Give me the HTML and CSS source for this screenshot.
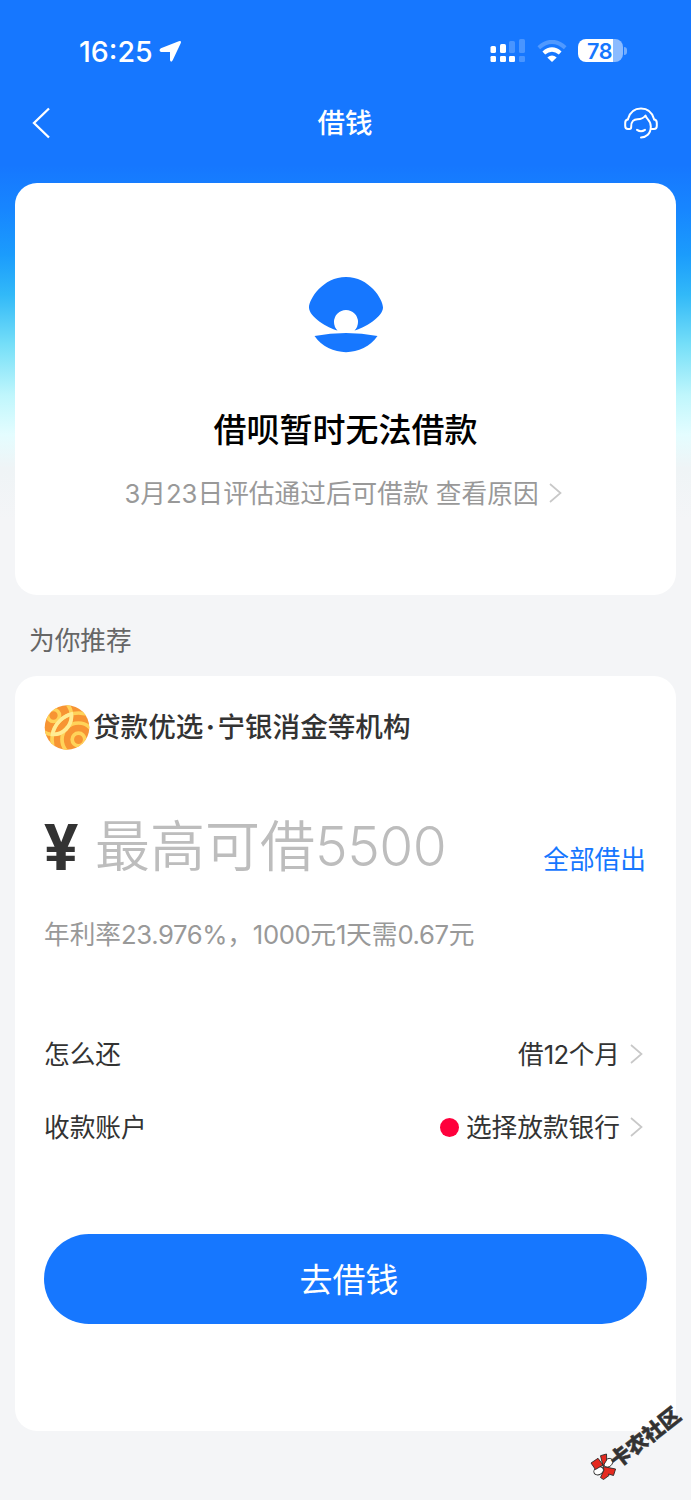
FILE: index.html
```html
<!DOCTYPE html>
<html lang="zh-CN">
<head>
<meta charset="utf-8">
<title>借钱</title>
<link rel="stylesheet" href="styles.css">
</head>
<body>
<div class="page">
  <div class="status">
    <span class="time">16:25</span>
    <svg class="locate" width="23" height="23" viewBox="0 0 23 23"><path d="M1.900 8.300 19.800 1.200Q22.800.3 21.700 3.200L13.700 20.300Q12 23 11 20.200V12H2Q-.9 10.500 1.900 8.300Z" fill="#fff"/></svg>
    <svg class="signal" width="35" height="24" viewBox="0 0 35 24" fill="#fff">
      <rect x="0.500" y="7" width="5.500" height="7" rx="1.600"/><rect x="10" y="5" width="6" height="9" rx="1.600"/>
      <rect x="0.500" y="17" width="5.500" height="6" rx="1.200"/><rect x="10" y="17" width="6" height="6" rx="1.200"/><rect x="19" y="17" width="6" height="6" rx="1.200"/>
      <g opacity=".22"><rect x="19" y="2" width="6" height="12" rx="1.600"/><rect x="29" y="0" width="6" height="14" rx="1.600"/><rect x="29" y="17" width="6" height="6" rx="1.200"/></g>
    </svg>
    <svg class="wifi" width="30" height="22" viewBox="0 0 30 22" fill="none" stroke="#fff">
      <path d="M1.800 7.700Q15-4 28.200 7.700" stroke-width="4" opacity=".25"/>
      <path d="M6.800 13Q15 6 23.200 13" stroke-width="4.200"/>
      <path d="M15 22 10.300 17.500Q15 13.500 19.700 17.500Z" fill="#fff" stroke="none"/>
    </svg>
    <div class="battery"><span>78</span></div>
    <i class="battery-tip"></i>
  </div>
  <div class="navbar">
    <svg class="back" width="20" height="32" viewBox="0 0 20 32"><path d="M17 1.500 2 16 17 30.500" fill="none" stroke="#fff" stroke-width="2.300"/></svg>
    <h1>借钱</h1>
    <svg class="service" width="34" height="32" viewBox="0 0 34 32" fill="none" stroke="#fff" stroke-width="2" stroke-linecap="round" stroke-linejoin="round">
      <path d="M4 12C6 5 11 1.500 17 1.500S28 5 30 12M4 12.500Q1.200 12.500 1.200 16V19Q1.200 22 4 22H5.500Q7.200 22 7.200 19.800C7 14 10 12.300 13.500 12.200Q19 12.200 21.500 8.500C22 12 26.800 12.500 26.800 19.500C26.800 27 22 30.400 17 30.400M30 12.500Q32.800 12.500 32.800 16V19Q32.800 22 30 22H26.500M13 22.800Q17 25.500 21 22.800"/>
    </svg>
  </div>

  <section class="card notice">
    <svg class="shell" width="76" height="78" viewBox="0 0 76 78" fill="#1677ff">
      <path d="M29.500 54.500C20 52 1 41 1 31.500C1 23 15 1 38 1S75 23 75 31.500C75 41 56 52 46.500 54.500A12 12 0 1 0 29.500 54.500Z"/>
      <path d="M6.500 60Q38 54 69.500 60C55 81.500 21 81.500 6.500 60Z"/>
    </svg>
    <h2>借呗暂时无法借款</h2>
    <p class="reason">3月23日评估通过后可借款 查看原因
      <svg class="chevron" width="13" height="20" viewBox="0 0 13 20"><path d="M1 1 11.500 10 1 19"/></svg></p>
  </section>

  <h3 class="section-title">为你推荐</h3>

  <section class="card loan">
    <div class="brand">
      <svg width="46" height="46" viewBox="0 0 46 46">
        <defs>
          <clipPath id="ball"><circle cx="23" cy="23.500" r="22.300"/></clipPath>
          <clipPath id="upper"><circle cx="9" cy="12" r="20"/></clipPath>
          <clipPath id="lower"><circle cx="34.500" cy="35.500" r="28"/></clipPath>
        </defs>
        <g clip-path="url(#ball)" fill="none" stroke="#ffd35a" stroke-width="3.700">
          <rect width="46" height="46" fill="#f79433" stroke="none"/>
          <circle cx="9.500" cy="11.500" r="6"/><circle cx="9" cy="12" r="18.500"/>
          <circle cx="34.500" cy="35.500" r="6.300"/><circle cx="34.500" cy="35.500" r="16.500"/><circle cx="34.500" cy="35.500" r="26.500"/>
          <circle cx="34.500" cy="35.500" r="26.500" stroke="#ffec94" clip-path="url(#upper)"/>
          <circle cx="9" cy="12" r="18.500" stroke="#ffec94" clip-path="url(#lower)"/>
        </g>
      </svg>
      <span>贷款优选<b class="dot">·</b>宁银消金等机构</span>
    </div>
    <div class="amount">
      <span class="yen">¥</span>
      <span class="placeholder">最高可借<span class="sum">5500</span></span>
      <span class="all">全部借出</span>
    </div>
    <p class="rate">年利率<span>23.976%</span>，<span>1000</span>元<span>1</span>天需<span>0.67</span>元</p>
    <div class="row">
      <span>怎么还</span>
      <span class="value">借<span class="months">12</span>个月<svg class="chevron" width="13" height="20" viewBox="0 0 13 20"><path d="M1 1 11.500 10 1 19"/></svg></span>
    </div>
    <div class="row">
      <span>收款账户</span>
      <span class="value"><i class="bank"></i>选择放款银行<svg class="chevron" width="13" height="20" viewBox="0 0 13 20"><path d="M1 1 11.500 10 1 19"/></svg></span>
    </div>
    <div class="submit">去借钱</div>
  </section>

  <div class="watermark">
    <svg width="27" height="28" viewBox="0 0 27 28" stroke="#292929" stroke-width=".9">
      <ellipse cx="18.300" cy="9.800" rx="5" ry="3.800" transform="rotate(-42 18.300 9.800)" fill="#fff"/>
      <ellipse cx="8.600" cy="17.800" rx="5" ry="3.800" transform="rotate(-30 8.600 17.800)" fill="#fff"/>
      <path d="M1 10 8 5.300 13 12 5.500 16.500ZM10.500 2.700 16.500 1 16.700 7 13 13ZM13 13.500 25.600 16 23.500 22.500 18.500 21 19 22.500 13.500 26.500 10.500 24.500 14 17Z" fill="#e5291f"/>
    </svg>
    <span>卡农社区</span>
  </div>
</div>
</body>
</html>
```
FILE: styles.css
```css
* { box-sizing: border-box; }
body { margin: 0; }
h1, h2, h3, p { margin: 0; font-weight: 400; }
svg { display: block; flex: none; }
.page {
  position: relative;
  width: 691px;
  height: 1500px;
  overflow: hidden;
  padding: 0 15px;
  font-family: Inter, "Noto Sans CJK SC", sans-serif;
  font-size: 25.700px;
  color: #333;
  background: linear-gradient(#1677ff 0, #1677ff 165px, #1786ff 210px, #1b9cfc 255px, #32b9f8 295px, #76dff8 345px, #bff6fc 395px, #e4fdff 435px, #eff4f6 468px, #f4f5f7 520px);
}
.status { display: flex; height: 88px; padding: 39px 49px 0 64px; align-items: flex-start; color: #fff; }
.time { width: 74px; font-size: 28.500px; line-height: 25px; font-weight: 500; }
.locate { margin: 1px 0 0 6px; }
.signal { margin: 0 0 0 auto; }
.wifi { margin: 1px 11px 0 12px; }
.battery { width: 45px; height: 23px; border-radius: 8px; background: linear-gradient(90deg, #fff 78%, #8bbbff 78%); color: #1677ff; font-size: 21.500px; line-height: 24px; font-weight: 600; letter-spacing: -.3px; padding-left: 9px; }
.battery-tip { width: 3px; height: 8px; margin: 8px 0 0 1px; border-radius: 0 3px 3px 0; background: #73adff; }
.navbar { display: flex; justify-content: space-between; align-items: center; height: 70px; padding: 0 18px 0 17px; margin-bottom: 25px; color: #fff; }
.navbar h1 { font-size: 27.500px; line-height: 40px; font-weight: 500; margin: 0 0 0 14px; }
.card { background: #fff; border-radius: 22px; }
.notice { height: 412px; display: flex; flex-direction: column; align-items: center; padding-top: 93px; }
.notice h2 { margin-top: 52px; font-size: 33px; line-height: 48px; font-weight: 500; color: #000; }
.reason { display: flex; align-items: center; margin: 21px 0 0 -5px; line-height: 38px; color: #999; white-space: nowrap; }
.reason .chevron { margin: -3px 0 0 10px; }
.chevron path { fill: none; stroke: #c8c8c8; stroke-width: 1.700; }
.section-title { padding: 27px 14px 0; height: 81px; font-size: 25.700px; line-height: 38px; color: #666; }
.loan { height: 755px; padding: 28px 29px 0; }
.brand { display: flex; align-items: center; gap: 3px; height: 46px; font-size: 27.600px; font-weight: 500; white-space: nowrap; }
.brand span { margin-top: -5px; }
.dot { display: inline-block; width: 14px; text-align: center; font-weight: 700; }
.amount { display: flex; align-items: center; height: 80px; margin-top: 51px; white-space: nowrap; }
.yen { width: 51px; font-family: Roboto, sans-serif; font-size: 64px; font-weight: 700; line-height: 80px; margin-top: 15px; }
.yen::first-letter { letter-spacing: 0; }
.placeholder { font-size: 55px; font-weight: 350; line-height: 80px; margin-top: 9px; color: #bdbdbd; }
.sum { letter-spacing: -.5px; font-weight: 350; }
.all { margin: 33px 1px 0 auto; color: #1677ff; }
.rate { margin-top: 35px; line-height: 38px; color: #999; white-space: nowrap; }
.rate span { letter-spacing: -.4px; }
.row { display: flex; justify-content: space-between; line-height: 38px; margin-top: 35px; }
.rate + .row { margin-top: 82px; }
.value { display: flex; align-items: center; padding-right: 4px; }
.months { letter-spacing: -.6px; }
.value .chevron { margin: -2px 0 0 10px; }
.bank { width: 19px; height: 19px; margin: -2px 7px 0 0; border-radius: 50%; background: #ff003c; }
.submit { height: 90px; margin-top: 87px; border-radius: 45px; background: #1677ff; color: #fff; font-size: 33px; line-height: 92px; text-align: center; padding-left: 7px; }
.watermark { position: absolute; left: 590px; top: 1453px; display: flex; white-space: nowrap; color: #333; }
.watermark span { margin: -4px 0 0 -3px; font-size: 20.700px; line-height: 28px; font-weight: 900; -webkit-text-stroke: .5px #333; transform: rotate(-38deg); transform-origin: 0 50%; }
```
